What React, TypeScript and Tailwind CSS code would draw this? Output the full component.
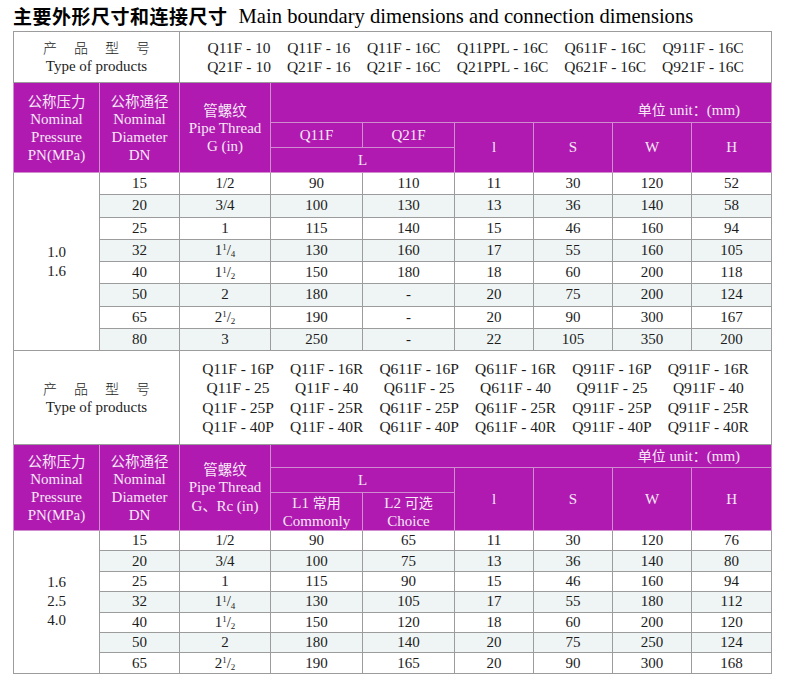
import React from 'react'

type Row = [number, string, number, number | string, number, number, number, number]

const rowsA: Row[] = [
  [15, '1/2', 90, 110, 11, 30, 120, 52],
  [20, '3/4', 100, 130, 13, 36, 140, 58],
  [25, '1', 115, 140, 15, 46, 160, 94],
  [32, '1 1/4', 130, 160, 17, 55, 160, 105],
  [40, '1 1/2', 150, 180, 18, 60, 200, 118],
  [50, '2', 180, '-', 20, 75, 200, 124],
  [65, '2 1/2', 190, '-', 20, 90, 300, 167],
  [80, '3', 250, '-', 22, 105, 350, 200],
]

const rowsB: Row[] = [
  [15, '1/2', 90, 65, 11, 30, 120, 76],
  [20, '3/4', 100, 75, 13, 36, 140, 80],
  [25, '1', 115, 90, 15, 46, 160, 94],
  [32, '1 1/4', 130, 105, 17, 55, 180, 112],
  [40, '1 1/2', 150, 120, 18, 60, 200, 120],
  [50, '2', 180, 140, 20, 75, 250, 124],
  [65, '2 1/2', 190, 165, 20, 90, 300, 168],
]

const productsA = [
  ['Q11F - 10', 'Q11F - 16', 'Q11F - 16C', 'Q11PPL - 16C', 'Q611F - 16C', 'Q911F - 16C'],
  ['Q21F - 10', 'Q21F - 16', 'Q21F - 16C', 'Q21PPL - 16C', 'Q621F - 16C', 'Q921F - 16C'],
]

const productsB = [
  ['Q11F - 16P', 'Q11F - 16R', 'Q611F - 16P', 'Q611F - 16R', 'Q911F - 16P', 'Q911F - 16R'],
  ['Q11F - 25', 'Q11F - 40', 'Q611F - 25', 'Q611F - 40', 'Q911F - 25', 'Q911F - 40'],
  ['Q11F - 25P', 'Q11F - 25R', 'Q611F - 25P', 'Q611F - 25R', 'Q911F - 25P', 'Q911F - 25R'],
  ['Q11F - 40P', 'Q11F - 40R', 'Q611F - 40P', 'Q611F - 40R', 'Q911F - 40P', 'Q911F - 40R'],
]

const cjk = "font-[family-name:'Noto_Sans_CJK_SC',sans-serif]"

// thread size like "1 1/4" -> 1¹/₄
function Thread({ value }: { value: string }) {
  const parts = value.split(' ')
  if (parts.length === 1) return <>{value}</>
  const [n, d] = parts[1].split('/')
  return (
    <>
      {parts[0]}
      <sup className="text-[9px]">{n}</sup>/<sub className="text-[9px]">{d}</sub>
    </>
  )
}

const td = 'border border-[#9c9c9c] p-0 text-center'
const th = 'border border-[#cf8ccf] bg-[#b01ab0] p-0 text-center font-normal text-[#f6e8f6]'

function ProductRow({ lines, height }: { lines: string[][]; height: string }) {
  return (
    <tr className={height}>
      <td colSpan={2} className={`${td} bg-white`}>
        <div className="leading-[19px]">
          <div className={`${cjk} tracking-[17px] pl-[17px] text-[14px] font-light`}>产品型号</div>
          <div>Type of products</div>
        </div>
      </td>
      <td colSpan={7} className={`${td} bg-white`}>
        <div className="grid grid-cols-[repeat(6,auto)] justify-center gap-x-[16px] leading-[19.5px] text-[15.5px]">
          {lines.flat().map((p, i) => (
            <span key={i} className="text-center whitespace-pre">{p}</span>
          ))}
        </div>
      </td>
    </tr>
  )
}

function DataRows({ rows, pressure, height }: { rows: Row[]; pressure: string[]; height: string }) {
  return (
    <>
      {rows.map((r, i) => {
        const bg = i % 2 === 1 ? 'bg-[#eef5f4]' : 'bg-white'
        return (
          <tr key={i} className={height}>
            {i === 0 && (
              <td rowSpan={rows.length} className={`${td} bg-white leading-[19px]`}>
                {pressure.map(p => (
                  <div key={p}>{p}</div>
                ))}
              </td>
            )}
            <td className={`${td} ${bg}`}>{r[0]}</td>
            <td className={`${td} ${bg}`}>
              <Thread value={r[1]} />
            </td>
            {r.slice(2).map((v, j) => (
              <td key={j} className={`${td} ${bg}`}>{v}</td>
            ))}
          </tr>
        )
      })}
    </>
  )
}

function Unit() {
  return (
    <>
      <span className={`${cjk} text-[14px]`}>单位</span> unit
      <span className={`${cjk} text-[14px]`}>：</span>(mm)
    </>
  )
}

function HeadLeft({ thread }: { thread: React.ReactNode }) {
  return (
    <>
      <th rowSpan={3} className={`${th} leading-[18px]`}>
        <div className={`${cjk} text-[14.5px]`}>公称压力</div>
        <div>Nominal</div>
        <div>Pressure</div>
        <div>PN(MPa)</div>
      </th>
      <th rowSpan={3} className={`${th} leading-[18px]`}>
        <div className={`${cjk} text-[14.5px]`}>公称通径</div>
        <div>Nominal</div>
        <div>Diameter</div>
        <div>DN</div>
      </th>
      <th rowSpan={3} className={`${th} leading-[18px]`}>
        <div className={`${cjk} text-[14.5px]`}>管螺纹</div>
        <div>Pipe Thread</div>
        <div>{thread}</div>
      </th>
    </>
  )
}

export default function App() {
  return (
    <div className="w-[790px] h-[681px] bg-white text-[#1c1c1c] font-[family-name:'Liberation_Serif','Noto_Sans_CJK_SC',serif] text-[15px]">
      {/* Title */}
      <div className="h-[31px] pl-[13px] flex items-center gap-[11px] pt-[1px]">
        <span className={`${cjk} font-bold text-[19px] tracking-[0.5px] text-black`}>
          主要外形尺寸和连接尺寸
        </span>
        <span className="text-[20.6px] text-black">Main boundary dimensions and connection dimensions</span>
      </div>

      <table className="ml-[13px] w-[758px] table-fixed border-collapse leading-none">
        <colgroup>
          <col className="w-[86px]" />
          <col className="w-[80px]" />
          <col className="w-[91px]" />
          <col className="w-[92px]" />
          <col className="w-[92px]" />
          <col className="w-[79px]" />
          <col className="w-[79px]" />
          <col className="w-[79px]" />
          <col className="w-[80px]" />
        </colgroup>
        <tbody>
          {/* Section 1 */}
          <ProductRow lines={productsA} height="h-[51px]" />
          <tr className="h-[40px]">
            <HeadLeft thread="G (in)" />
            <th colSpan={6} className={`${th} align-bottom text-right pr-[31px] pb-[4px]`}>
              <Unit />
            </th>
          </tr>
          <tr className="h-[25px]">
            <th className={th}>Q11F</th>
            <th className={th}>Q21F</th>
            <th rowSpan={2} className={th}>l</th>
            <th rowSpan={2} className={th}>S</th>
            <th rowSpan={2} className={th}>W</th>
            <th rowSpan={2} className={th}>H</th>
          </tr>
          <tr className="h-[25px]">
            <th colSpan={2} className={th}>L</th>
          </tr>
          <DataRows rows={rowsA} pressure={['1.0', '1.6']} height="h-[22.25px]" />

          {/* Section 2 */}
          <ProductRow lines={productsB} height="h-[94px]" />
          <tr className="h-[23px]">
            <HeadLeft
              thread={
                <>
                  G<span className={`${cjk} text-[14px]`}>、</span>Rc (in)
                </>
              }
            />
            <th colSpan={6} className={`${th} text-right pr-[31px]`}>
              <Unit />
            </th>
          </tr>
          <tr className="h-[25px]">
            <th colSpan={2} className={th}>L</th>
            <th rowSpan={2} className={th}>l</th>
            <th rowSpan={2} className={th}>S</th>
            <th rowSpan={2} className={th}>W</th>
            <th rowSpan={2} className={th}>H</th>
          </tr>
          <tr className="h-[37px]">
            <th className={`${th} leading-[18px]`}>
              <div>
                L1 <span className={`${cjk} text-[14px]`}>常用</span>
              </div>
              <div>Commonly</div>
            </th>
            <th className={`${th} leading-[18px]`}>
              <div>
                L2 <span className={`${cjk} text-[14px]`}>可选</span>
              </div>
              <div>Choice</div>
            </th>
          </tr>
          <DataRows rows={rowsB} pressure={['1.6', '2.5', '4.0']} height="h-[20.4px]" />
        </tbody>
      </table>
    </div>
  )
}
